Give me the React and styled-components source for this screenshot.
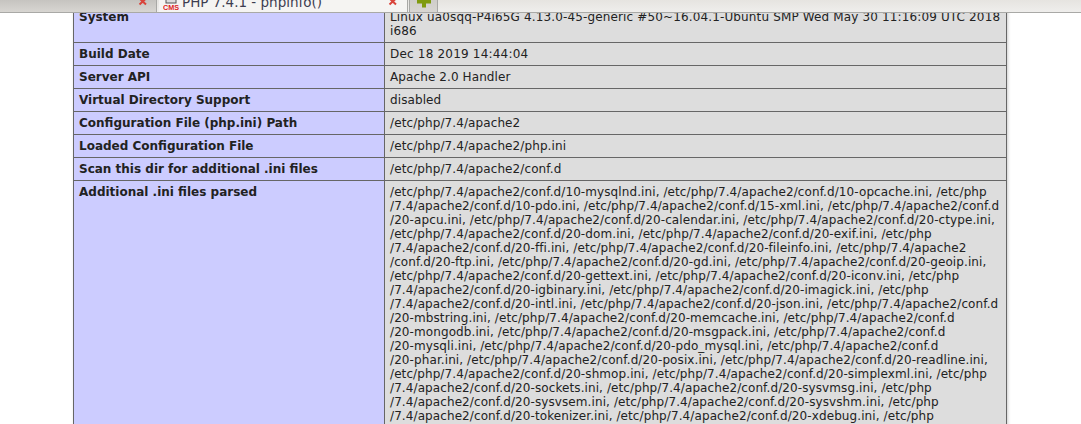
import React from "react";
import styled, { createGlobalStyle } from "styled-components";

const Global = createGlobalStyle`
  html, body { margin: 0; padding: 0; background: #fff; overflow: hidden; }
  #root { width: 1081px; height: 424px; overflow: hidden; }
`;
const Page = styled.div`
  width: 1081px; height: 424px; display: flex; flex-direction: column; overflow: hidden;
  font-family: "DejaVu Sans", sans-serif; color: #222;
`;
const TabBar = styled.div`
  flex: none; height: 13px; box-sizing: border-box; display: flex; align-items: flex-start;
  background: linear-gradient(#e6e4e0, #efeeec); border-bottom: 1px solid #a9a9a6;
`;
const InactiveTab = styled.div`
  width: 157px; height: 12px; box-sizing: border-box; display: flex; justify-content: flex-end; padding-right: 8px;
  background: linear-gradient(#c6c4c0, #d8d6d2); border-right: 1px solid #a9a9a6;
  overflow: hidden;
`;
const ActiveTab = styled.div`
  width: 249px; height: 12px; margin-left: 2px; box-sizing: border-box; display: flex; align-items: flex-start;
  padding: 0 9px 0 4px; background: #f5f4f2; border-right: 1px solid #a9a9a6; overflow: hidden;
`;
const TabTitle = styled.span`
  flex: 1; margin: -6px 0 0 3px; font: 13.5px/16px "DejaVu Sans", sans-serif; color: #3d3d50; white-space: nowrap;
`;
const NewTab = styled.div`
  width: 29px; height: 12px; margin-left: 1px; box-sizing: border-box; display: flex; justify-content: center; align-items: flex-start;
  background: linear-gradient(#cfcdc9, #d8d6d2); border-left: 1px solid #a9a9a6; border-right: 1px solid #a9a9a6;
`;
const Content = styled.div`flex: 1; overflow: hidden; display: flex; justify-content: flex-start; padding-left: 73px;`;
const Table = styled.table`
  width: 934px; height: max-content; margin-top: -8px; border-collapse: collapse; table-layout: fixed; box-shadow: 1px 2px 3px #ccc; font-size: 12px; line-height: 14px;
`;
const Key = styled.td`
  box-sizing: border-box; border: 1px solid #666; background: #ccf; padding: 4px 5px; vertical-align: top; font-weight: bold; color: #222;
`;
const Val = styled.td`
  border: 1px solid #666; background: #ddd; padding: 4px 5px; vertical-align: top; color: #222;
  letter-spacing: ${(p) => p.$tracking}px;
`;
const Line = styled.span`
  display: block; white-space: nowrap;
`;

const CloseX = () => (
  <svg width="10" height="12" viewBox="0 0 10 12" style={{flex:"none"}}><path d="M1.5 -1.5 L8 4.5 M8 -1.5 L1.5 4.5" stroke="#d9443b" strokeWidth="2"/></svg>
);
const Plus = () => (
  <svg width="16" height="12" viewBox="0 0 16 12"><path d="M1 0h14v3.5h-5v4h-4v-4h-5z" fill="#7f9a0e"/></svg>
);
const Favicon = () => (
  <svg width="16" height="12" viewBox="0 0 16 12" style={{flex:"none"}}>
    <rect x="3" y="-3" width="10" height="6" fill="#ddd" stroke="#555"/>
    <text x="0" y="10" fontSize="7" fontWeight="bold" fontFamily="Liberation Sans" fill="#d22" textLength="16" lengthAdjust="spacingAndGlyphs">CMS</text>
  </svg>
);

const iniLines = [
  "/etc/php/7.4/apache2/conf.d/10-mysqlnd.ini, /etc/php/7.4/apache2/conf.d/10-opcache.ini, /etc/php",
  "/7.4/apache2/conf.d/10-pdo.ini, /etc/php/7.4/apache2/conf.d/15-xml.ini, /etc/php/7.4/apache2/conf.d",
  "/20-apcu.ini, /etc/php/7.4/apache2/conf.d/20-calendar.ini, /etc/php/7.4/apache2/conf.d/20-ctype.ini,",
  "/etc/php/7.4/apache2/conf.d/20-dom.ini, /etc/php/7.4/apache2/conf.d/20-exif.ini, /etc/php",
  "/7.4/apache2/conf.d/20-ffi.ini, /etc/php/7.4/apache2/conf.d/20-fileinfo.ini, /etc/php/7.4/apache2",
  "/conf.d/20-ftp.ini, /etc/php/7.4/apache2/conf.d/20-gd.ini, /etc/php/7.4/apache2/conf.d/20-geoip.ini,",
  "/etc/php/7.4/apache2/conf.d/20-gettext.ini, /etc/php/7.4/apache2/conf.d/20-iconv.ini, /etc/php",
  "/7.4/apache2/conf.d/20-igbinary.ini, /etc/php/7.4/apache2/conf.d/20-imagick.ini, /etc/php",
  "/7.4/apache2/conf.d/20-intl.ini, /etc/php/7.4/apache2/conf.d/20-json.ini, /etc/php/7.4/apache2/conf.d",
  "/20-mbstring.ini, /etc/php/7.4/apache2/conf.d/20-memcache.ini, /etc/php/7.4/apache2/conf.d",
  "/20-mongodb.ini, /etc/php/7.4/apache2/conf.d/20-msgpack.ini, /etc/php/7.4/apache2/conf.d",
  "/20-mysqli.ini, /etc/php/7.4/apache2/conf.d/20-pdo_mysql.ini, /etc/php/7.4/apache2/conf.d",
  "/20-phar.ini, /etc/php/7.4/apache2/conf.d/20-posix.ini, /etc/php/7.4/apache2/conf.d/20-readline.ini,",
  "/etc/php/7.4/apache2/conf.d/20-shmop.ini, /etc/php/7.4/apache2/conf.d/20-simplexml.ini, /etc/php",
  "/7.4/apache2/conf.d/20-sockets.ini, /etc/php/7.4/apache2/conf.d/20-sysvmsg.ini, /etc/php",
  "/7.4/apache2/conf.d/20-sysvsem.ini, /etc/php/7.4/apache2/conf.d/20-sysvshm.ini, /etc/php",
  "/7.4/apache2/conf.d/20-tokenizer.ini, /etc/php/7.4/apache2/conf.d/20-xdebug.ini, /etc/php",
];

const rows = [
  ["System", ["Linux ua0sqq-P4i65G 4.13.0-45-generic #50~16.04.1-Ubuntu SMP Wed May 30 11:16:09 UTC 2018", "i686"], 0.14],
  ["Build Date", ["Dec 18 2019 14:44:04"], 0.2],
  ["Server API", ["Apache 2.0 Handler"], 0.1],
  ["Virtual Directory Support", ["disabled"], 0.1],
  ["Configuration File (php.ini) Path", ["/etc/php/7.4/apache2"], 0.1],
  ["Loaded Configuration File", ["/etc/php/7.4/apache2/php.ini"], 0.1],
  ["Scan this dir for additional .ini files", ["/etc/php/7.4/apache2/conf.d"], 0.1],
  ["Additional .ini files parsed", iniLines, 0.095],
];

export default function App() {
  return (
    <Page>
      <Global />
      <TabBar>
        <InactiveTab><CloseX /></InactiveTab>
        <ActiveTab><Favicon /><TabTitle>PHP 7.4.1 - phpinfo()</TabTitle><CloseX /></ActiveTab>
        <NewTab><Plus /></NewTab>
      </TabBar>
      <Content>
        <Table>
          <colgroup><col style={{width: 311}} /><col /></colgroup>
          <tbody>
            {rows.map(([k, lines, tracking]) => (
              <tr key={k}>
                <Key>{k}</Key>
                <Val $tracking={tracking}>{lines.map((l) => <Line key={l}>{l}</Line>)}</Val>
              </tr>
            ))}
          </tbody>
        </Table>
      </Content>
    </Page>
  );
}
